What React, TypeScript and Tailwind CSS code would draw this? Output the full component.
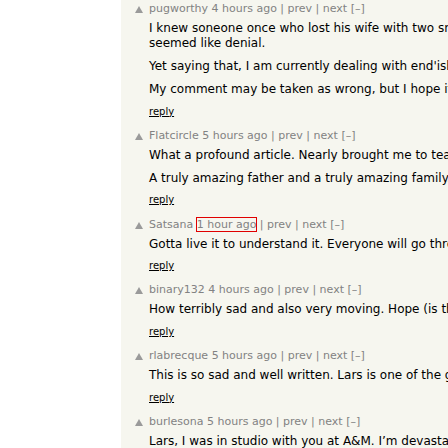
const comments = [
  {
    user: "pugworthy",
    age: "4 hours ago",
    paras: [
      ["I knew soneone once who lost his wife with two small kids at home. Everything he did", "seemed like denial."],
      ["Yet saying that, I am currently dealing with end'ish of life with my own father, and it is hard."],
      ["My comment may be taken as wrong, but I hope it is not. Everyone grieves differently."],
    ],
  },
  {
    user: "Flatcircle",
    age: "5 hours ago",
    paras: [
      ["What a profound article. Nearly brought me to tears."],
      ["A truly amazing father and a truly amazing family."],
    ],
  },
  {
    user: "Satsana",
    age: "1 hour ago",
    boxed: true,
    paras: [["Gotta live it to understand it. Everyone will go through it at some point."]],
  },
  {
    user: "binary132",
    age: "4 hours ago",
    paras: [["How terribly sad and also very moving. Hope (is that the right word?) for the family."]],
  },
  {
    user: "rlabrecque",
    age: "5 hours ago",
    paras: [["This is so sad and well written. Lars is one of the good ones."]],
  },
  {
    user: "burlesona",
    age: "5 hours ago",
    paras: [["Lars, I was in studio with you at A&M. I\u2019m devastated to read this."]],
  },
];

const Arrow = () => (
  <svg width="10" height="10" viewBox="0 0 10 10" className="mt-[3px]">
    <polygon points="5,1 9,8 1,8" fill="#9a9a9a" />
  </svg>
);

function Comment({ c }: { c: (typeof comments)[number] }) {
  return (
    <div className="flex flex-row">
      <div className="w-[15px] shrink-0">
        <Arrow />
      </div>
      <div className="flex flex-col">
        <div className="h-[14px] text-[11px] leading-[14px] text-[#828282] whitespace-nowrap">
          {c.user}{" "}
          <span className={c.boxed ? "outline outline-1 outline-[#e00000]" : ""}>{c.age}</span>
          {" | prev | next [\u2013]"}
        </div>
        <div className="mt-[5px] flex flex-col gap-[8px] text-[12px] leading-[15px] text-black whitespace-nowrap">
          {c.paras.map((lines, i) => (
            <p key={i}>
              {lines.map((l, j) => (
                <span key={j} className="block">{l}</span>
              ))}
            </p>
          ))}
        </div>
        <div className="mt-[7.5px] h-[14px] text-[10px] leading-[14px] text-black">
          <span className="underline">reply</span>
        </div>
      </div>
    </div>
  );
}

export default function App() {
  return (
    <div className="w-[448px] h-[448px] overflow-hidden bg-white flex flex-row font-['DejaVu_Sans',sans-serif]">
      <div className="w-[121px] shrink-0 bg-white" />
      <div className="flex-1 bg-[#f6f6ef] overflow-hidden pl-[13px] pt-[2px] flex flex-col gap-[10.3px]">
        {comments.map((c) => (
          <Comment key={c.user} c={c} />
        ))}
      </div>
    </div>
  );
}
